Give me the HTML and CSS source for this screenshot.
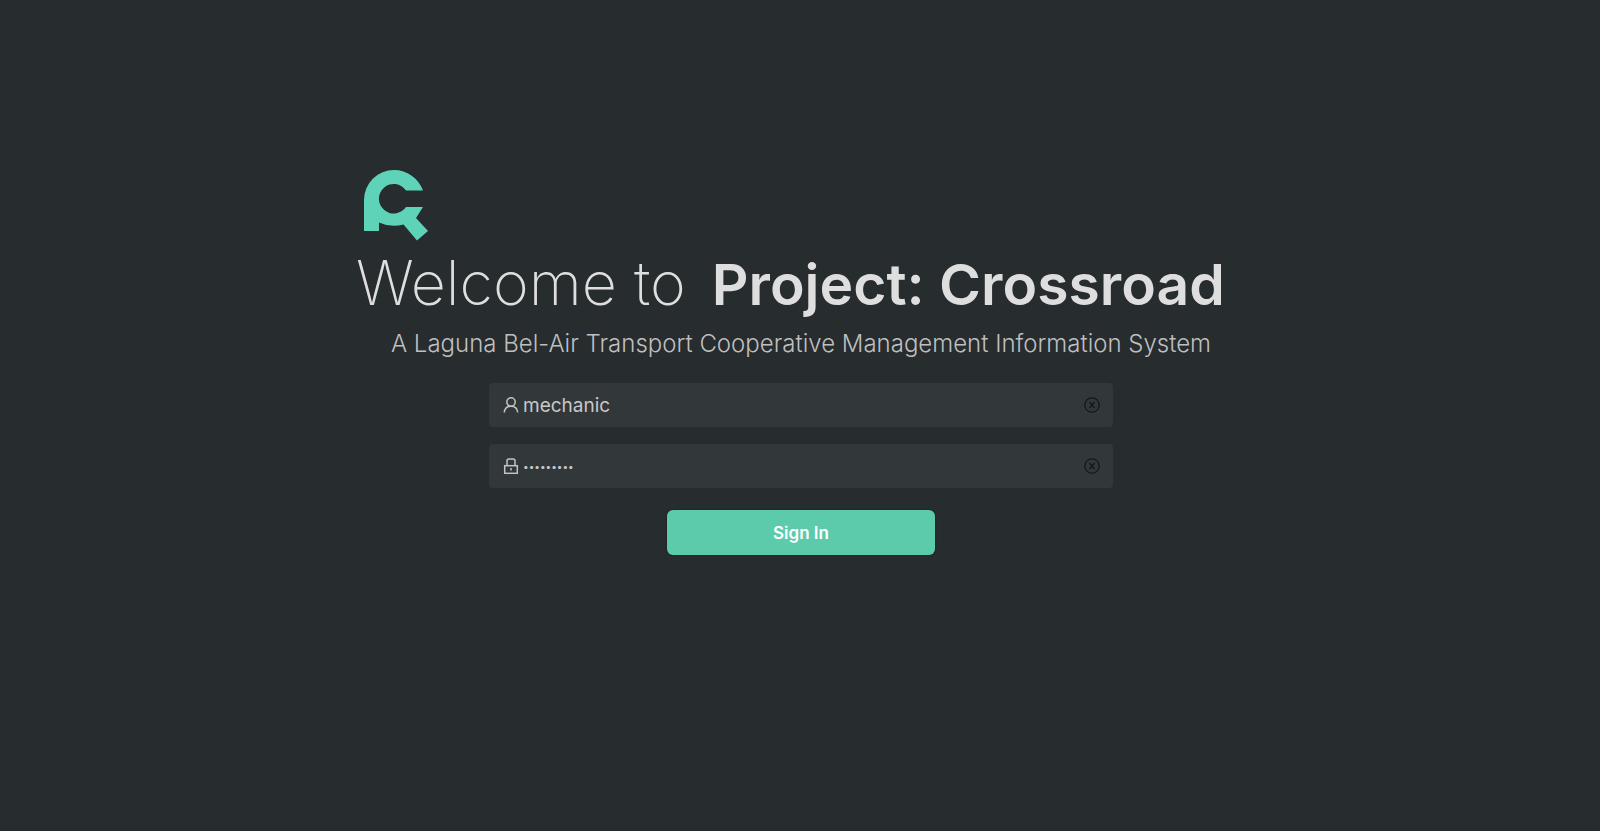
FILE: index.html
```html
<!DOCTYPE html>
<html lang="en">
<head>
<meta charset="utf-8">
<meta name="viewport" content="width=device-width, initial-scale=1">
<title>Project: Crossroad</title>
<link rel="stylesheet" href="styles.css">
</head>
<body>
<main class="login">
  <svg class="logo" viewBox="0 0 66 72" role="img" aria-label="Crossroad logo">
    <path d="M1 62V31A30 30 0 0 1 31 1A31 31 0 0 1 60 21.500H43A14.800 14.800 0 1 0 43 38H60L53 49L65 62L54 71.500L40.500 55.500Q28 59 16 53.500V62Z"/>
  </svg>
  <h1 class="title"><span class="welcome">Welcome to</span> <span class="product">Project: Crossroad</span></h1>
  <p class="subtitle">A Laguna Bel-Air Transport Cooperative Management Information System</p>
  <form class="form">
    <div class="field">
      <label for="user" aria-label="Username">
        <svg class="icon" viewBox="0 0 16 16"><circle cx="8" cy="5" r="4.200"/><path d="M1.300 15.500C1.600 11.500 4.200 9.200 8 9.200s6.400 2.300 6.700 6.300"/></svg>
      </label>
      <input class="input" id="user" type="text" value="mechanic">
      <button class="clear" type="button" aria-label="Clear username">
        <svg class="icon" viewBox="0 0 16 16"><circle cx="8" cy="8" r="7.200"/><path d="M5.500 5l5 6M10.500 5l-5 6"/></svg>
      </button>
    </div>
    <div class="field">
      <label for="pass" aria-label="Password">
        <svg class="icon" viewBox="0 0 16 16"><rect x="1.700" y="7.700" width="12.600" height="7.600"/><path d="M4 7.500V3q0-2 2-2h4q2 0 2 2v4.500M8 10v2.500"/></svg>
      </label>
      <input class="input password" id="pass" type="password" value="mechanic1">
      <button class="clear" type="button" aria-label="Clear password">
        <svg class="icon" viewBox="0 0 16 16"><circle cx="8" cy="8" r="7.200"/><path d="M5.500 5l5 6M10.500 5l-5 6"/></svg>
      </button>
    </div>
    <button class="submit" type="submit">Sign In</button>
  </form>
</main>
</body>
</html>
```
FILE: styles.css
```css
* { box-sizing: border-box; }
body {
  margin: 0;
  min-height: 100vh;
  padding-left: 2px;
  background: #272c2f;
  color: #dedede;
  font-family: Inter, "Open Sans", sans-serif;
}
.login {
  max-width: 890px;
  margin: 0 auto;
  padding-top: 169px;
}
.logo {
  display: block;
  width: 66px;
  height: 72px;
  margin-left: 7px;
  fill: #5fd3b8;
}
.title {
  display: flex;
  align-items: baseline;
  gap: 26px;
  margin: 6px 0 0;
  line-height: 72px;
  white-space: nowrap;
}
.welcome {
  font-size: 61px;
  font-weight: 200;
}
.product {
  font-size: 57px;
  font-weight: 600;
}
.subtitle {
  margin: 7px 0 0;
  color: #bfbfbf;
  font-size: 24px;
  font-weight: 300;
  line-height: 32px;
  text-align: center;
  white-space: nowrap;
}
.form {
  display: flex;
  flex-direction: column;
  align-items: center;
  gap: 17px;
  max-width: 624px;
  margin: 23px auto 0;
}
.field {
  display: flex;
  align-items: center;
  width: 100%;
  height: 44px;
  padding: 0 13px 0 14px;
  border-radius: 4px;
  background: #32373a;
}
.icon {
  display: block;
  width: 16px;
  height: 16px;
  fill: none;
  stroke: #c4c4c4;
  stroke-width: 1.5;
}
.input {
  flex: 1;
  min-width: 0;
  height: 44px;
  padding: 0 4px;
  border: 0;
  outline: 0;
  background: transparent;
  color: #c8c8c8;
  font: 400 19px Inter, "Open Sans", sans-serif;
}
.password { font-size: 10px; }
.clear {
  padding: 0;
  border: 0;
  background: transparent;
}
.clear .icon {
  stroke: #14181a;
  stroke-width: 1.3;
}
.submit {
  width: 268px;
  height: 45px;
  margin-top: 5px;
  border: 0;
  border-radius: 6px;
  background: #5ccbab;
  box-shadow: 0 0 2px #14181a;
  color: #fff;
  font: 600 17px Inter, "Open Sans", sans-serif;
}
```
